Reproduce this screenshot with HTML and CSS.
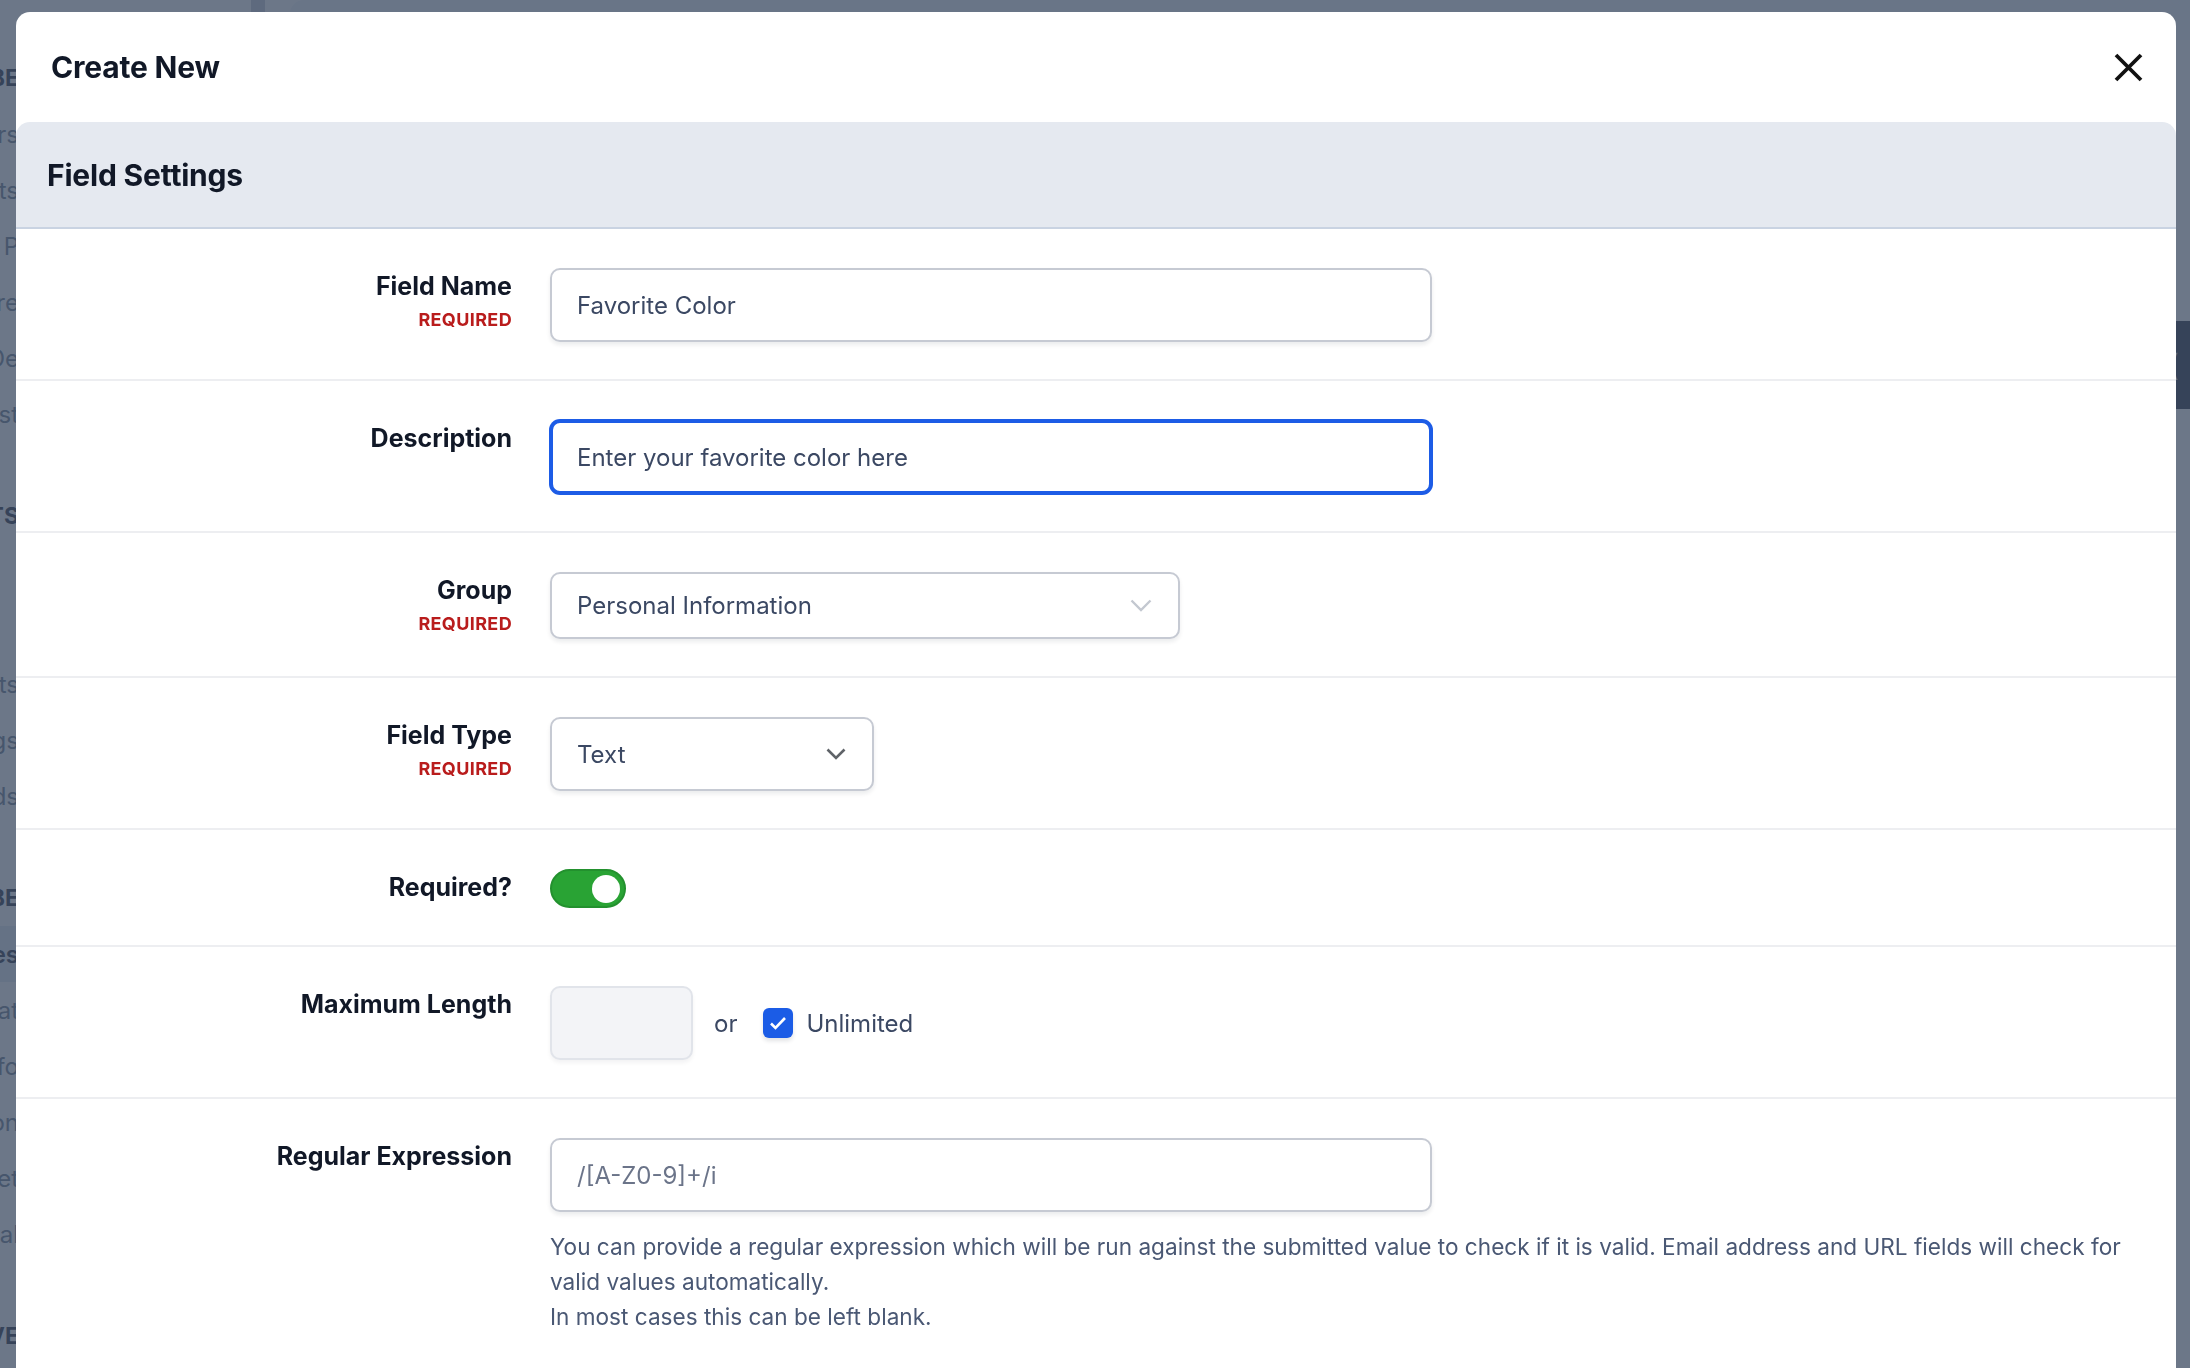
FILE: index.html
```html
<!DOCTYPE html>
<html lang="en">
<head>
  <meta charset="UTF-8">
  <meta name="viewport" content="width=device-width, initial-scale=1.0">
  <title>Create New Field</title>
  <link rel="stylesheet" href="styles.css">
</head>
<body>

<!-- Page behind the dialog -->
<div class="page">
  <aside class="page-nav">
    <div class="nav-list">
      <div class="nav-head">SUBSCRIBE</div>
      <div class="nav-item">Members</div>
      <div class="nav-item">Lists</div>
      <div class="nav-item">Sign-up P</div>
      <div class="nav-item">Signature</div>
      <div class="nav-item">Pages De</div>
      <div class="nav-item">Lists &amp; Test</div>
      <div class="nav-gap"></div>
      <div class="nav-head">EVENTS</div>
      <div class="nav-item"></div>
      <div class="nav-item"></div>
      <div class="nav-item">Events</div>
      <div class="nav-item">Settings</div>
      <div class="nav-item">Fields</div>
      <div class="nav-gap"></div>
      <div class="nav-head">SUBSCRIBE</div>
      <div class="nav-item active">Categories</div>
      <div class="nav-item">Format</div>
      <div class="nav-item">Info</div>
      <div class="nav-item">Location</div>
      <div class="nav-item">Set</div>
      <div class="nav-item">Material</div>
      <div class="nav-gap"></div>
      <div class="nav-head">ARCHIVE</div>
    </div>
  </aside>
  <div class="page-divider"></div>
  <main class="page-main">
    <div class="page-card"></div>
    <div class="page-tools">
      <div class="page-button">(</div>
    </div>
  </main>
</div>

<div class="backdrop"></div>

<!-- Dialog -->
<div class="modal">
  <header class="modal-header">
    <h1>Create New</h1>
    <button class="close-button" aria-label="Close">
      <svg width="29" height="29" viewBox="0 0 29 29">
        <path d="M2 2 L27 27 M27 2 L2 27" stroke="#111" stroke-width="3.8" fill="none"/>
      </svg>
    </button>
  </header>

  <div class="section-head">
    <h2>Field Settings</h2>
  </div>

  <!-- Field name -->
  <div class="form-row">
    <div class="field-label">
      <label>Field Name</label>
      <span class="req">Required</span>
    </div>
    <div class="field-control">
      <input class="text-input wide" type="text" value="Favorite Color">
    </div>
  </div>

  <!-- Description -->
  <div class="form-row">
    <div class="field-label">
      <label>Description</label>
    </div>
    <div class="field-control">
      <input class="text-input wide is-focused" type="text" value="Enter your favorite color here">
    </div>
  </div>

  <!-- Group -->
  <div class="form-row">
    <div class="field-label">
      <label>Group</label>
      <span class="req">Required</span>
    </div>
    <div class="field-control">
      <div class="select group-select">
        <span>Personal Information</span>
        <svg class="chevron light" width="22" height="13" viewBox="0 0 22 13">
          <polyline points="1.5,1.5 11,11 20.5,1.5" fill="none" stroke="currentColor" stroke-width="2.4"/>
        </svg>
      </div>
    </div>
  </div>

  <!-- Field type -->
  <div class="form-row">
    <div class="field-label">
      <label>Field Type</label>
      <span class="req">Required</span>
    </div>
    <div class="field-control">
      <div class="select type-select">
        <span>Text</span>
        <svg class="chevron dark" width="20" height="12" viewBox="0 0 20 12">
          <polyline points="1.5,1.5 10,10 18.5,1.5" fill="none" stroke="currentColor" stroke-width="2.6"/>
        </svg>
      </div>
    </div>
  </div>

  <!-- Required toggle -->
  <div class="form-row">
    <div class="field-label">
      <label>Required?</label>
    </div>
    <div class="field-control">
      <div class="toggle is-on"><span class="knob"></span></div>
    </div>
  </div>

  <!-- Maximum length -->
  <div class="form-row">
    <div class="field-label">
      <label>Maximum Length</label>
    </div>
    <div class="field-control inline">
      <div class="length-box"></div>
      <span class="or">or</span>
      <span class="checkbox">
        <svg width="18" height="14" viewBox="0 0 18 14">
          <polyline points="2,7.5 6.5,12 16,2" fill="none" stroke="#fff" stroke-width="2.6"/>
        </svg>
      </span>
      <span class="check-label">Unlimited</span>
    </div>
  </div>

  <!-- Regular expression -->
  <div class="form-row last">
    <div class="field-label">
      <label>Regular Expression</label>
    </div>
    <div class="field-control">
      <input class="text-input wide" type="text" placeholder="/[A-Z0-9]+/i">
      <p class="help">
        You can provide a regular expression which will be run against the submitted value to check if it is valid. Email address and URL fields will check for valid values automatically.<br>
        In most cases this can be left blank.
      </p>
    </div>
  </div>
</div>

</body>
</html>
```

FILE: styles.css
```css
* {box-sizing: border-box;}
html, body {margin: 0; height: 100%; overflow: hidden;}
body {font-family: Inter, "Noto Sans", "Liberation Sans", sans-serif; background: #fff; color: #1e293b;}

/* Page behind the dialog */
.page {
  display: grid;
  grid-template-columns: 251px 14px 1fr;
  height: 100%;
}

.page-nav {padding-top: 50px;}
.nav-list {width: 19px; font-size: 24px; color: #64748b;}

.nav-head, .nav-item {
  display: flex;
  justify-content: flex-end;
  align-items: center;
  height: 56px;
  white-space: nowrap;
}

.nav-head {font-weight: 700; color: #1e293b; font-size: 23px;}
.nav-item.active {background: #e2e8f0; color: #1e293b; font-weight: 600;}
.nav-gap {height: 46px;}

.page-divider {background: #c4cad4;}

.page-main {padding: 0 0 0 25px; display: flex; flex-direction: column;}
.page-card {height: 40px; border-radius: 14px 0 0 0; background: #f1f5f9;}
.page-tools {display: flex; justify-content: flex-end; margin-top: 281px;}

.page-button {
  width: 40px;
  height: 88px;
  background: #1e293b;
  color: #cbd5e1;
  font-size: 30px;
  display: flex;
  align-items: center;
  padding-left: 18px;
}

.backdrop {
  position: fixed;
  inset: 0;
  background: rgba(62, 76, 99, 0.76);
}

/* Dialog */
.modal {
  position: fixed;
  top: 12px;
  left: 16px;
  right: 14px;
  bottom: -60px;
  background: #fff;
  border-radius: 14px 14px 0 0;
  overflow: hidden;
}

.modal-header {
  display: flex;
  align-items: center;
  justify-content: space-between;
  height: 110px;
  padding: 0 33px 0 35px;
}

.modal-header h1 {
  margin: 0;
  font-size: 30px;
  font-weight: 700;
  color: #111827;
  letter-spacing: -0.2px;
}

.close-button {
  width: 29px;
  height: 29px;
  padding: 0;
  border: none;
  background: none;
  cursor: pointer;
  display: flex;
}

.section-head {
  display: flex;
  align-items: center;
  height: 107px;
  padding: 0 31px;
  background: #e5e9f0;
  border-bottom: 2px solid #c9d3e2;
  border-radius: 14px 14px 0 0;
}

.section-head h2 {
  margin: 0;
  font-size: 30px;
  font-weight: 700;
  color: #111827;
  letter-spacing: -0.2px;
}

/* Form rows */
.form-row {
  display: grid;
  grid-template-columns: 496px 1fr;
  column-gap: 38px;
  align-items: start;
  padding: 39px 40px 37px 0;
  border-bottom: 2px solid #edeef1;
}

.form-row.last {border-bottom: none;}

.field-label {
  display: flex;
  flex-direction: column;
  align-items: flex-end;
  padding-top: 1px;
}

.field-label label {
  font-size: 25px;
  line-height: 35px;
  font-weight: 700;
  color: #111827;
}

.req {
  margin-top: 3px;
  font-size: 18px;
  line-height: 25px;
  font-weight: 700;
  color: #b91c1c;
  letter-spacing: 0.02em;
  text-transform: uppercase;
}

.field-control.inline {
  display: flex;
  align-items: center;
}

/* Inputs */
.text-input {
  display: block;
  height: 74px;
  padding: 0 25px;
  border: 2px solid #c6cad3;
  border-radius: 10px;
  background: #fff;
  box-shadow: 0 3px 4px rgba(15, 23, 42, 0.08);
  font-family: inherit;
  font-size: 24px;
  color: #3b4863;
  outline: none;
}

.text-input::placeholder {color: #6b7489;}
.text-input.wide {width: 882px;}

.text-input.is-focused {
  border: 3px solid #1d5ce6;
  padding: 0 24px;
  box-shadow: 0 0 0 1px #1d5ce6;
}

.select {
  display: flex;
  align-items: center;
  justify-content: space-between;
  padding: 0 26px 0 25px;
  border: 2px solid #c6cad3;
  border-radius: 10px;
  background: #fff;
  box-shadow: 0 3px 4px rgba(15, 23, 42, 0.08);
  font-size: 24px;
  color: #3b4863;
}

.group-select {width: 630px; height: 67px;}
.type-select {width: 324px; height: 74px;}

.chevron.light {color: #c3c8d0;}
.chevron.dark {color: #5f6368;}

/* Toggle */
.toggle {
  display: flex;
  align-items: center;
  justify-content: flex-end;
  width: 76px;
  height: 39px;
  padding: 0 4px;
  border: 2px solid #23912e;
  border-radius: 20px;
  background: #29a334;
}

.knob {
  width: 28px;
  height: 28px;
  border-radius: 50%;
  background: #fff;
}

/* Maximum length */
.length-box {
  width: 143px;
  height: 74px;
  border: 2px solid #e1e4ea;
  border-radius: 10px;
  background: #f3f4f7;
  box-shadow: 0 3px 4px rgba(15, 23, 42, 0.05);
}

.or {
  margin-left: 21px;
  font-size: 24px;
  color: #3b4863;
}

.checkbox {
  display: flex;
  align-items: center;
  justify-content: center;
  width: 30px;
  height: 30px;
  margin-left: 26px;
  border-radius: 6px;
  background: #1b5ce6;
  box-shadow: 0 3px 4px rgba(15, 23, 42, 0.12);
}

.check-label {
  margin-left: 13px;
  font-size: 24px;
  color: #3b4863;
}

/* Help text */
.help {
  margin: 17px 0 0;
  font-size: 22.6px;
  line-height: 35px;
  color: #4a5874;
}
```
